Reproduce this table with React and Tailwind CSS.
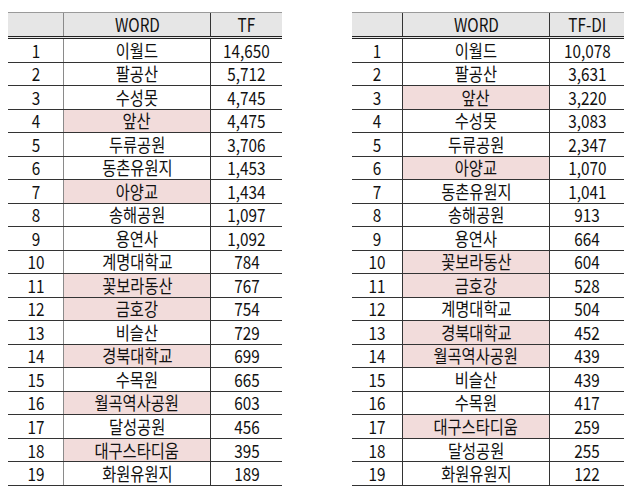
const leftRows = [
  [1, "이월드", "14,650", false],
  [2, "팔공산", "5,712", false],
  [3, "수성못", "4,745", false],
  [4, "앞산", "4,475", true],
  [5, "두류공원", "3,706", false],
  [6, "동촌유원지", "1,453", false],
  [7, "아양교", "1,434", true],
  [8, "송해공원", "1,097", false],
  [9, "용연사", "1,092", false],
  [10, "계명대학교", "784", false],
  [11, "꽃보라동산", "767", true],
  [12, "금호강", "754", true],
  [13, "비슬산", "729", false],
  [14, "경북대학교", "699", true],
  [15, "수목원", "665", false],
  [16, "월곡역사공원", "603", true],
  [17, "달성공원", "456", false],
  [18, "대구스타디움", "395", true],
  [19, "화원유원지", "189", false],
];

const rightRows = [
  [1, "이월드", "10,078", false],
  [2, "팔공산", "3,631", false],
  [3, "앞산", "3,220", true],
  [4, "수성못", "3,083", false],
  [5, "두류공원", "2,347", false],
  [6, "아양교", "1,070", true],
  [7, "동촌유원지", "1,041", false],
  [8, "송해공원", "913", false],
  [9, "용연사", "664", false],
  [10, "꽃보라동산", "604", true],
  [11, "금호강", "528", true],
  [12, "계명대학교", "504", false],
  [13, "경북대학교", "452", true],
  [14, "월곡역사공원", "439", true],
  [15, "비슬산", "439", false],
  [16, "수목원", "417", false],
  [17, "대구스타디움", "259", true],
  [18, "달성공원", "255", false],
  [19, "화원유원지", "122", false],
];

function Cell({ children, className = "" }) {
  return (
    <div className={`flex items-center justify-center ${className}`}>
      <span className="inline-block scale-x-[0.85] whitespace-nowrap leading-[21px]">
        {children}
      </span>
    </div>
  );
}

function RankTable({ rows, valueLabel, cols, firstLine }) {
  return (
    <div className="flex flex-col">
      <div
        className={`grid ${cols} h-[27px] border-t border-b-[3px] border-t-[#9a9a9a] border-b-[#222] border-double bg-[#e6e6e6]`}
      >
        <div />
        <Cell className={`border-l ${firstLine}`}>WORD</Cell>
        <Cell className="border-l border-[#333]">{valueLabel}</Cell>
      </div>

      {rows.map(([rank, word, value, marked]) => (
        <div
          key={rank}
          className={`grid ${cols} h-[23.53px] border-b border-[#333]`}
        >
          <Cell>{rank}</Cell>
          <Cell
            className={`border-l ${firstLine} ${marked ? "bg-[#f2dcdb]" : ""}`}
          >
            {word}
          </Cell>
          <Cell className="border-l border-[#333]">{value}</Cell>
        </div>
      ))}
    </div>
  );
}

export default function App() {
  return (
    <div
      className="flex w-[640px] h-[502px] bg-white pt-[12px] pl-[8px] text-[18px] text-[#111]"
      style={{ fontFamily: '"Noto Sans CJK KR", "Noto Sans", sans-serif' }}
    >
      <RankTable
        rows={leftRows}
        valueLabel="TF"
        cols="grid-cols-[55px_147px_72px]"
        firstLine="border-[#8a8a8a]"
      />
      <div className="w-[70px]" />
      <RankTable
        rows={rightRows}
        valueLabel="TF-DI"
        cols="grid-cols-[50px_147px_75px]"
        firstLine="border-[#333]"
      />
    </div>
  );
}
